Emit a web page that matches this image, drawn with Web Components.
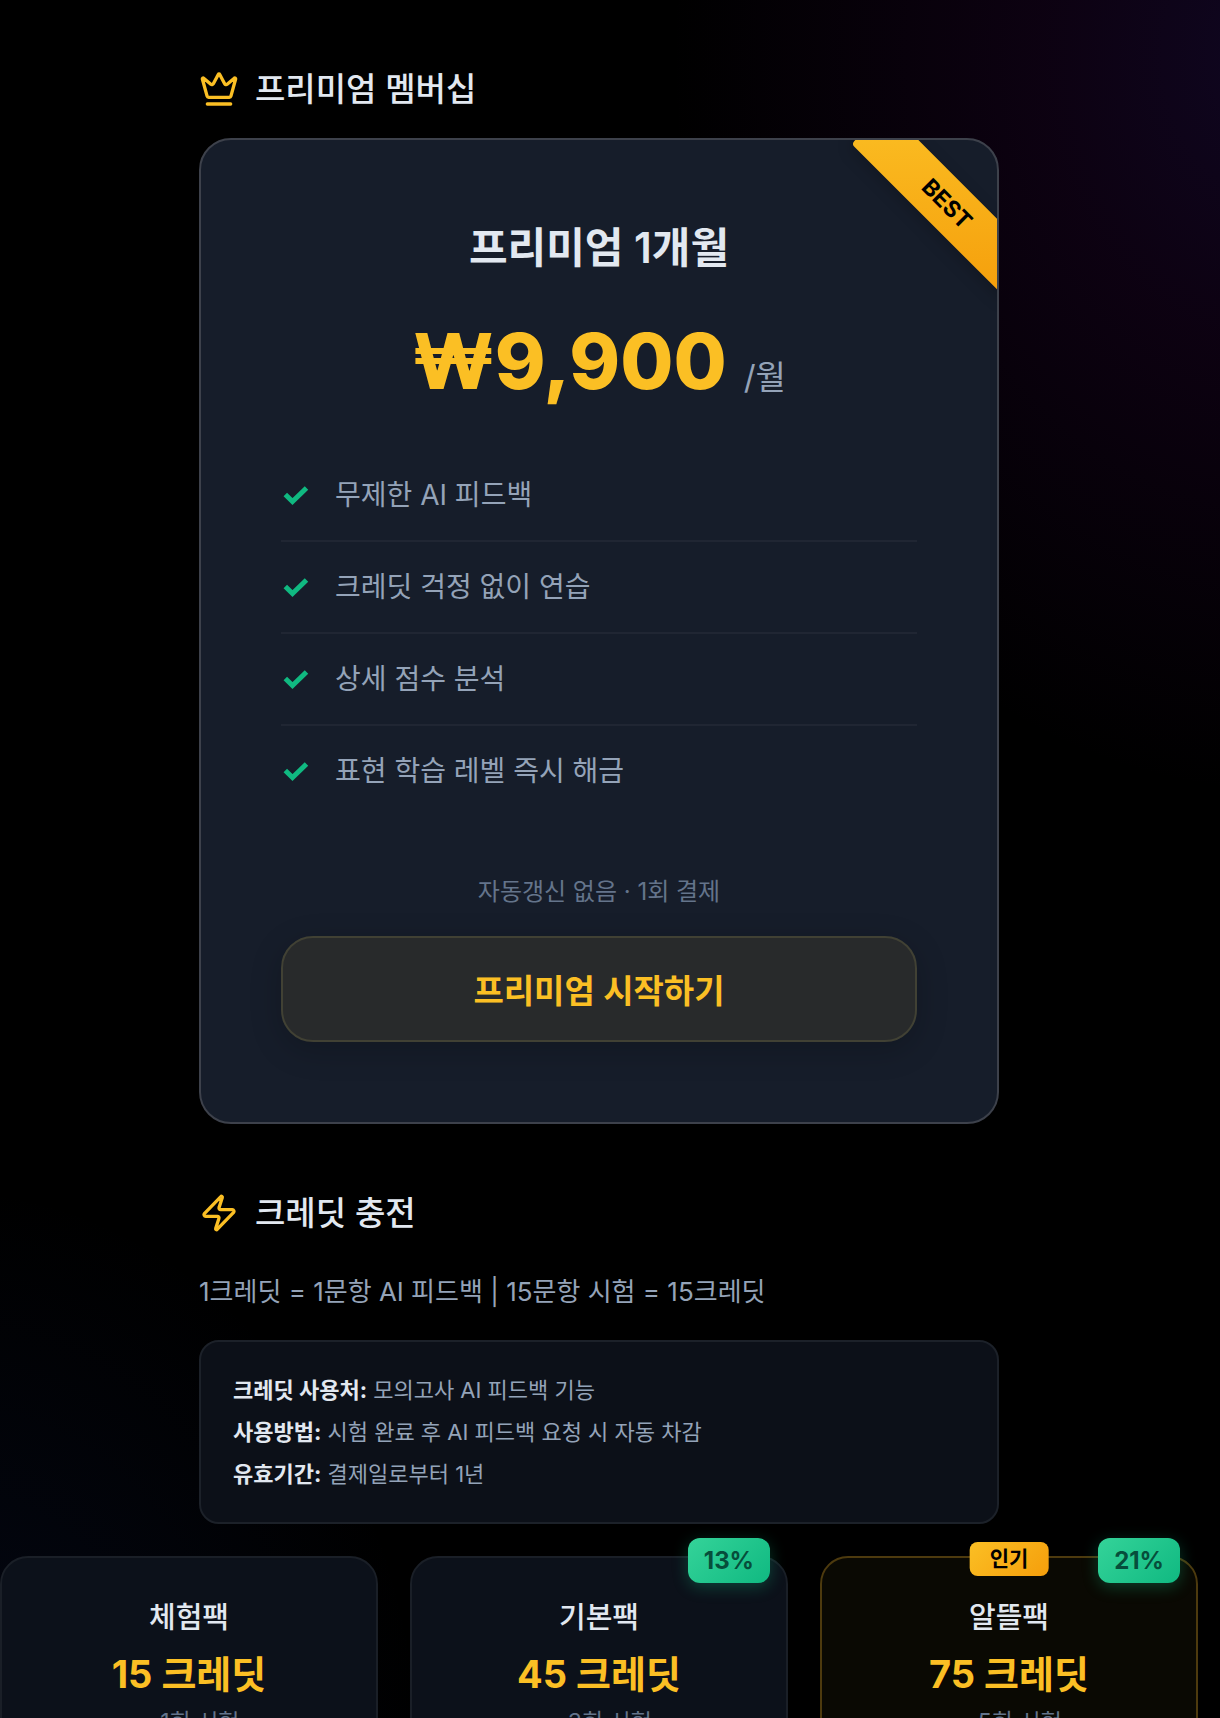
<!DOCTYPE html>
<html lang="ko">
<head>
<meta charset="utf-8">
<meta name="viewport" content="width=device-width, initial-scale=1">
<title>프리미엄 멤버십</title>
<style>
  html, body {
    margin: 0;
    height: 100%;
    overflow: hidden;
    background: #000;
  }

  body {
    font-family: Inter, "Noto Sans CJK KR", sans-serif;
    color: #e2e8f0;
    --gold: #fbbf24;
    --muted: #94a3b8;
    --dim: #64748b;
  }
</style>
</head>
<body>
<pricing-page>
  <section-title icon="crown">프리미엄 멤버십</section-title>
  <plan-card name="프리미엄 1개월" price="₩9,900" period="/월" ribbon="BEST" note="자동갱신 없음 · 1회 결제" action="프리미엄 시작하기">
    <plan-feature>무제한 AI 피드백</plan-feature>
    <plan-feature>크레딧 걱정 없이 연습</plan-feature>
    <plan-feature>상세 점수 분석</plan-feature>
    <plan-feature last>표현 학습 레벨 즉시 해금</plan-feature>
  </plan-card>
  <section-title icon="zap" spaced>크레딧 충전</section-title>
  <credit-info>
    <span slot="summary">1크레딧 = 1문항 AI 피드백 | 15문항 시험 = 15크레딧</span>
    <info-line label="크레딧 사용처:">모의고사 AI 피드백 기능</info-line>
    <info-line label="사용방법:">시험 완료 후 AI 피드백 요청 시 자동 차감</info-line>
    <info-line label="유효기간:">결제일로부터 1년</info-line>
  </credit-info>
  <credit-pack slot="packs" name="체험팩" credits="15 크레딧">= 1회 시험</credit-pack>
  <credit-pack slot="packs" name="기본팩" credits="45 크레딧" discount="13%">= 3회 시험</credit-pack>
  <credit-pack slot="packs" name="알뜰팩" credits="75 크레딧" discount="21%" tag="인기">= 5회 시험</credit-pack>
</pricing-page>

<script>
const icons = {
  crown: `<path d="M11.562 3.266a.5.5 0 0 1 .876 0L15.39 8.87a1 1 0 0 0 1.516.294L21.183 5.5a.5.5 0 0 1 .798.519l-2.834 10.246a1 1 0 0 1-.956.734H5.81a1 1 0 0 1-.957-.734L2.02 6.02a.5.5 0 0 1 .798-.519l4.276 3.664a1 1 0 0 0 1.516-.294z"/><path d="M5 21h14"/>`,
  zap: `<path d="M4 14a1 1 0 0 1-.78-1.63l9.9-10.2a.5.5 0 0 1 .86.46l-1.92 6.02A1 1 0 0 0 13 10h7a1 1 0 0 1 .78 1.63l-9.9 10.2a.5.5 0 0 1-.86-.46l1.92-6.02A1 1 0 0 0 11 14z"/>`
};

class PricingPage extends HTMLElement {
  constructor() {
    super();
    this.attachShadow({ mode: "open" }).innerHTML = `
      <style>
        :host {
          display: block;
          box-sizing: border-box;
          min-height: 100vh;
          padding: 64px 22px 64px 0;
          background:
            radial-gradient(ellipse 50% 40% at 105% 3%, rgba(70, 29, 149, 0.22), rgba(88, 10, 120, 0.14) 40%, transparent),
            radial-gradient(ellipse 40% 32% at -5% 96%, rgba(30, 64, 175, 0.12), transparent),
            #000;
        }

        .column {
          max-width: 800px;
          margin: 0 auto;
        }

        .packs {
          display: grid;
          grid-template-columns: repeat(3, 1fr);
          gap: 32px;
          margin-top: 32px;
        }
      </style>
      <main>
        <div class="column"><slot></slot></div>
        <div class="packs"><slot name="packs"></slot></div>
      </main>
    `;
  }
}

class SectionTitle extends HTMLElement {
  constructor() {
    super();
    this.attachShadow({ mode: "open" }).innerHTML = `
      <style>
        :host {
          display: block;
          margin-bottom: 24px;
        }

        :host([spaced]) {
          margin: 64px 0 32px;
        }

        h2 {
          display: flex;
          align-items: center;
          gap: 16px;
          margin: 0;
          font-size: 33px;
          font-weight: 500;
          line-height: 50px;
        }

        svg {
          width: 40px;
          height: 40px;
          fill: none;
          stroke: var(--gold);
          stroke-width: 2;
          stroke-linecap: round;
          stroke-linejoin: round;
        }
      </style>
      <h2>
        <svg viewBox="0 0 24 24" aria-hidden="true">${icons[this.getAttribute("icon")] || ""}</svg>
        <slot></slot>
      </h2>
    `;
  }
}

class PlanCard extends HTMLElement {
  constructor() {
    super();
    const attr = name => this.getAttribute(name) || "";
    this.attachShadow({ mode: "open" }).innerHTML = `
      <style>
        :host {
          display: block;
          position: relative;
          overflow: hidden;
          padding: 80px;
          border: 2px solid #3d414b;
          border-radius: 32px;
          background: #161d2a;
          text-align: center;
        }

        /* corner band, clipped by the card */
        .ribbon {
          position: absolute;
          top: 39px;
          right: -60px;
          width: 220px;
          border-radius: 4px;
          background: linear-gradient(135deg, #fbbf24, #f59e0b);
          box-shadow: 0 4px 16px rgba(0, 0, 0, 0.2);
          color: #000;
          font-size: 23px;
          font-weight: 700;
          line-height: 50px;
          transform: rotate(45deg);
        }

        h3 {
          margin: 0;
          font-size: 42px;
          font-weight: 600;
          line-height: 56px;
        }

        .price {
          margin: 28px 0 0;
          color: var(--gold);
          font-size: 77px;
          font-weight: 800;
          line-height: 114px;
        }

        .price span {
          color: var(--muted);
          font-size: 33px;
          font-weight: 400;
        }

        ul {
          margin: 16px 0 56px;
          padding: 0;
          list-style: none;
          text-align: left;
        }

        .note {
          margin: 0 0 24px;
          color: var(--dim);
          font-size: 24px;
          line-height: 40px;
        }

        button {
          display: block;
          width: 100%;
          height: 106px;
          border: 2px solid #414134;
          border-radius: 32px;
          background: #282a2b;
          box-shadow: 0 8px 32px rgba(0, 0, 0, 0.2);
          color: var(--gold);
          font-family: inherit;
          font-size: 33px;
          font-weight: 600;
          cursor: pointer;
        }
      </style>
      <div class="ribbon">${attr("ribbon")}</div>
      <h3>${attr("name")}</h3>
      <p class="price">${attr("price")} <span>${attr("period")}</span></p>
      <ul><slot></slot></ul>
      <p class="note">${attr("note")}</p>
      <button type="button">${attr("action")}</button>
    `;
  }
}

class PlanFeature extends HTMLElement {
  constructor() {
    super();
    this.attachShadow({ mode: "open" }).innerHTML = `
      <style>
        :host {
          display: flex;
          align-items: center;
          gap: 26px;
          border-bottom: 2px solid #202633;
          color: var(--muted);
          font-size: 28px;
          line-height: 90px;
        }

        :host([last]) {
          border-bottom: 0;
        }

        svg {
          width: 28px;
          height: 28px;
          fill: none;
          stroke: #10b981;
          stroke-width: 5;
        }
      </style>
      <svg viewBox="0 0 28 28" aria-hidden="true"><path d="M4.3 13.5l7.2 7L25.5 7"/></svg>
      <slot></slot>
    `;
  }

  connectedCallback() {
    this.setAttribute("role", "listitem");
  }
}

class CreditInfo extends HTMLElement {
  constructor() {
    super();
    this.attachShadow({ mode: "open" }).innerHTML = `
      <style>
        :host {
          display: block;
        }

        p {
          margin: 0 0 26px;
          color: var(--muted);
          font-size: 26px;
          line-height: 44px;
        }

        .box {
          padding: 27px 32px;
          border: 2px solid #1c2129;
          border-radius: 20px;
          background: #0c1018;
        }
      </style>
      <p><slot name="summary"></slot></p>
      <div class="box"><slot></slot></div>
    `;
  }
}

class InfoLine extends HTMLElement {
  constructor() {
    super();
    this.attachShadow({ mode: "open" }).innerHTML = `
      <style>
        :host {
          display: block;
          color: var(--muted);
          font-size: 22px;
          line-height: 42px;
        }

        strong {
          color: #e2e8f0;
          font-weight: 700;
        }
      </style>
      <strong>${this.getAttribute("label")}</strong> <slot></slot>
    `;
  }
}

class CreditPack extends HTMLElement {
  constructor() {
    super();
    const discount = this.getAttribute("discount");
    const tag = this.getAttribute("tag");
    this.attachShadow({ mode: "open" }).innerHTML = `
      <style>
        :host {
          display: block;
          position: relative;
          padding: 38px 32px;
          border: 2px solid #1a1f27;
          border-radius: 28px;
          background: #0c111a;
          text-align: center;
        }

        :host([tag]) {
          border-color: #4d3a0e;
          background: #0a0903;
        }

        h3 {
          margin: 0;
          font-size: 29px;
          font-weight: 500;
          line-height: 44px;
        }

        .credits {
          margin: 8px 0 0;
          color: var(--gold);
          font-size: 38px;
          font-weight: 700;
          line-height: 52px;
        }

        .exams {
          margin: 0;
          color: var(--dim);
          font-size: 23px;
          line-height: 44px;
        }

        /* badges sit over the top border */
        .discount {
          position: absolute;
          top: -20px;
          right: 16px;
          padding: 0 16px;
          border-radius: 12px;
          background: linear-gradient(135deg, #34d399, #10b981);
          box-shadow: 0 4px 16px rgba(16, 185, 129, 0.3);
          color: #064e3b;
          font-size: 24px;
          font-weight: 700;
          line-height: 45px;
        }

        .tag {
          position: absolute;
          top: -16px;
          left: 50%;
          padding: 0 20px;
          border-radius: 8px;
          background: linear-gradient(135deg, #fbbf24, #f59e0b);
          color: #000;
          font-size: 21px;
          font-weight: 600;
          line-height: 34px;
          transform: translateX(-50%);
        }
      </style>
      ${tag ? `<span class="tag">${tag}</span>` : ""}
      ${discount ? `<span class="discount">${discount}</span>` : ""}
      <h3>${this.getAttribute("name")}</h3>
      <p class="credits">${this.getAttribute("credits")}</p>
      <p class="exams"><slot></slot></p>
    `;
  }
}

customElements.define("pricing-page", PricingPage);
customElements.define("section-title", SectionTitle);
customElements.define("plan-card", PlanCard);
customElements.define("plan-feature", PlanFeature);
customElements.define("credit-info", CreditInfo);
customElements.define("info-line", InfoLine);
customElements.define("credit-pack", CreditPack);
</script>
</body>
</html>
